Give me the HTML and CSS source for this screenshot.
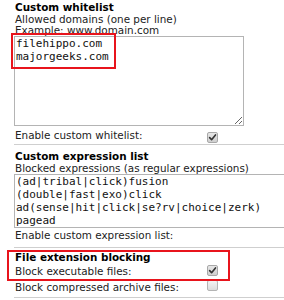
FILE: index.html
```html
<!DOCTYPE html>
<html>
<head>
<meta charset="utf-8">
<link rel="stylesheet" href="styles.css">
</head>
<body>
<div class="panel">
  <div class="section first">
    <div class="title">Custom whitelist</div>
    <div class="desc">Allowed domains (one per line)</div>
    <div class="desc">Example: www.domain.com</div>
    <div class="area-wrap">
      <textarea class="area area-white" spellcheck="false">filehippo.com
majorgeeks.com</textarea>
      <div class="mark mark-white"></div>
    </div>
  </div>
  <div class="row row-a">
    <span class="label">Enable custom whitelist:</span>
    <span class="cb checked"><svg viewBox="0 0 10 10" width="9" height="9"><path d="M1.8 5.2 L4 7.4 L8.3 2.2" fill="none" stroke="#333" stroke-width="1.8" stroke-linecap="round" stroke-linejoin="round"/></svg></span>
  </div>

  <div class="section sec-expr">
    <div class="title">Custom expression list</div>
    <div class="desc">Blocked expressions (as regular expressions)</div>
    <textarea class="area area-expr" spellcheck="false">(ad|tribal|click)fusion
(double|fast|exo)click
ad(sense|hit|click|se?rv|choice|zerk)
pagead</textarea>
  </div>
  <div class="row row-b">
    <span class="label">Enable custom expression list:</span>
  </div>

  <div class="section sec-ext">
    <div class="title">File extension blocking</div>
    <div class="row row-c">
      <span class="label">Block executable files:</span>
      <span class="cb checked"><svg viewBox="0 0 10 10" width="9" height="9"><path d="M1.8 5.2 L4 7.4 L8.3 2.2" fill="none" stroke="#333" stroke-width="1.8" stroke-linecap="round" stroke-linejoin="round"/></svg></span>
    </div>
    <div class="mark mark-ext"></div>
  </div>
  <div class="row row-d">
    <span class="label">Block compressed archive files:</span>
    <span class="cb"></span>
  </div>
  <div class="section"></div>
</div>
</body>
</html>
```
FILE: styles.css
```css
html, body {
  margin: 0;
  padding: 0;
  background: #fff;
  overflow: hidden;
}
body {
  font-family: "DejaVu Sans", sans-serif;
  font-size: 10.4px;
  line-height: 11px;
  color: #222;
}
.panel {
  margin-left: 14px;
  width: 320px;
}
.section {
  border-top: 1px solid #cfcfcf;
  position: relative;
}
.section.first {
  border-top: none;
  padding-top: 1px;
}
.sec-expr {
  padding-top: 5px;
}
.sec-ext {
  padding-top: 3px;
}
.title {
  font-weight: bold;
  color: #000;
  padding-left: 1px;
  line-height: 13px;
}
.sec-ext .title {
  line-height: 12px;
}
.desc {
  padding-left: 1px;
}
.area-wrap {
  position: relative;
}
.area {
  display: block;
  box-sizing: border-box;
  margin: 0;
  border: 1px solid #b4b4b4;
  border-radius: 0;
  padding: 0 1px;
  font-family: "DejaVu Sans Mono", monospace;
  font-size: 11px;
  line-height: 13px;
  color: #111;
  background: #fff;
  outline: none;
  overflow: hidden;
}
.area-white {
  width: 230px;
  height: 90px;
}
.area-expr {
  width: 320px;
  height: 54px;
  resize: none;
}
.row {
  display: flex;
  align-items: flex-start;
}
.label {
  width: 192px;
  padding-left: 1px;
}
.row-a {
  height: 18px;
}
.row-a .label {
  padding-top: 4px;
}
.row-a .cb {
  margin-top: 6px;
}
.row-b {
  height: 19px;
}
.row-b .label {
  padding-top: 2px;
}
.row-c {
  height: 16px;
}
.row-c .label {
  padding-top: 3px;
}
.row-c .cb {
  margin-top: 2px;
}
.row-d {
  height: 18px;
}
.row-d .label {
  padding-top: 3px;
}
.row-d .cb {
  margin-top: 1px;
}
.cb {
  box-sizing: border-box;
  width: 11px;
  height: 11px;
  border: 1px solid #b4b4b4;
  border-radius: 2px;
  background: linear-gradient(#f4f4f4, #dcdcdc);
  display: flex;
  align-items: center;
  justify-content: center;
}
.cb.checked {
  background: linear-gradient(#e6e6e6, #cfcfcf);
  border-color: #a8a8a8;
}
.mark {
  position: absolute;
  border: 2px solid #e8141c;
  pointer-events: none;
}
.mark-white {
  left: -3px;
  top: -3px;
  width: 101px;
  height: 32px;
}
.mark-ext {
  left: -7px;
  top: 2px;
  width: 219px;
  height: 27px;
}
```
